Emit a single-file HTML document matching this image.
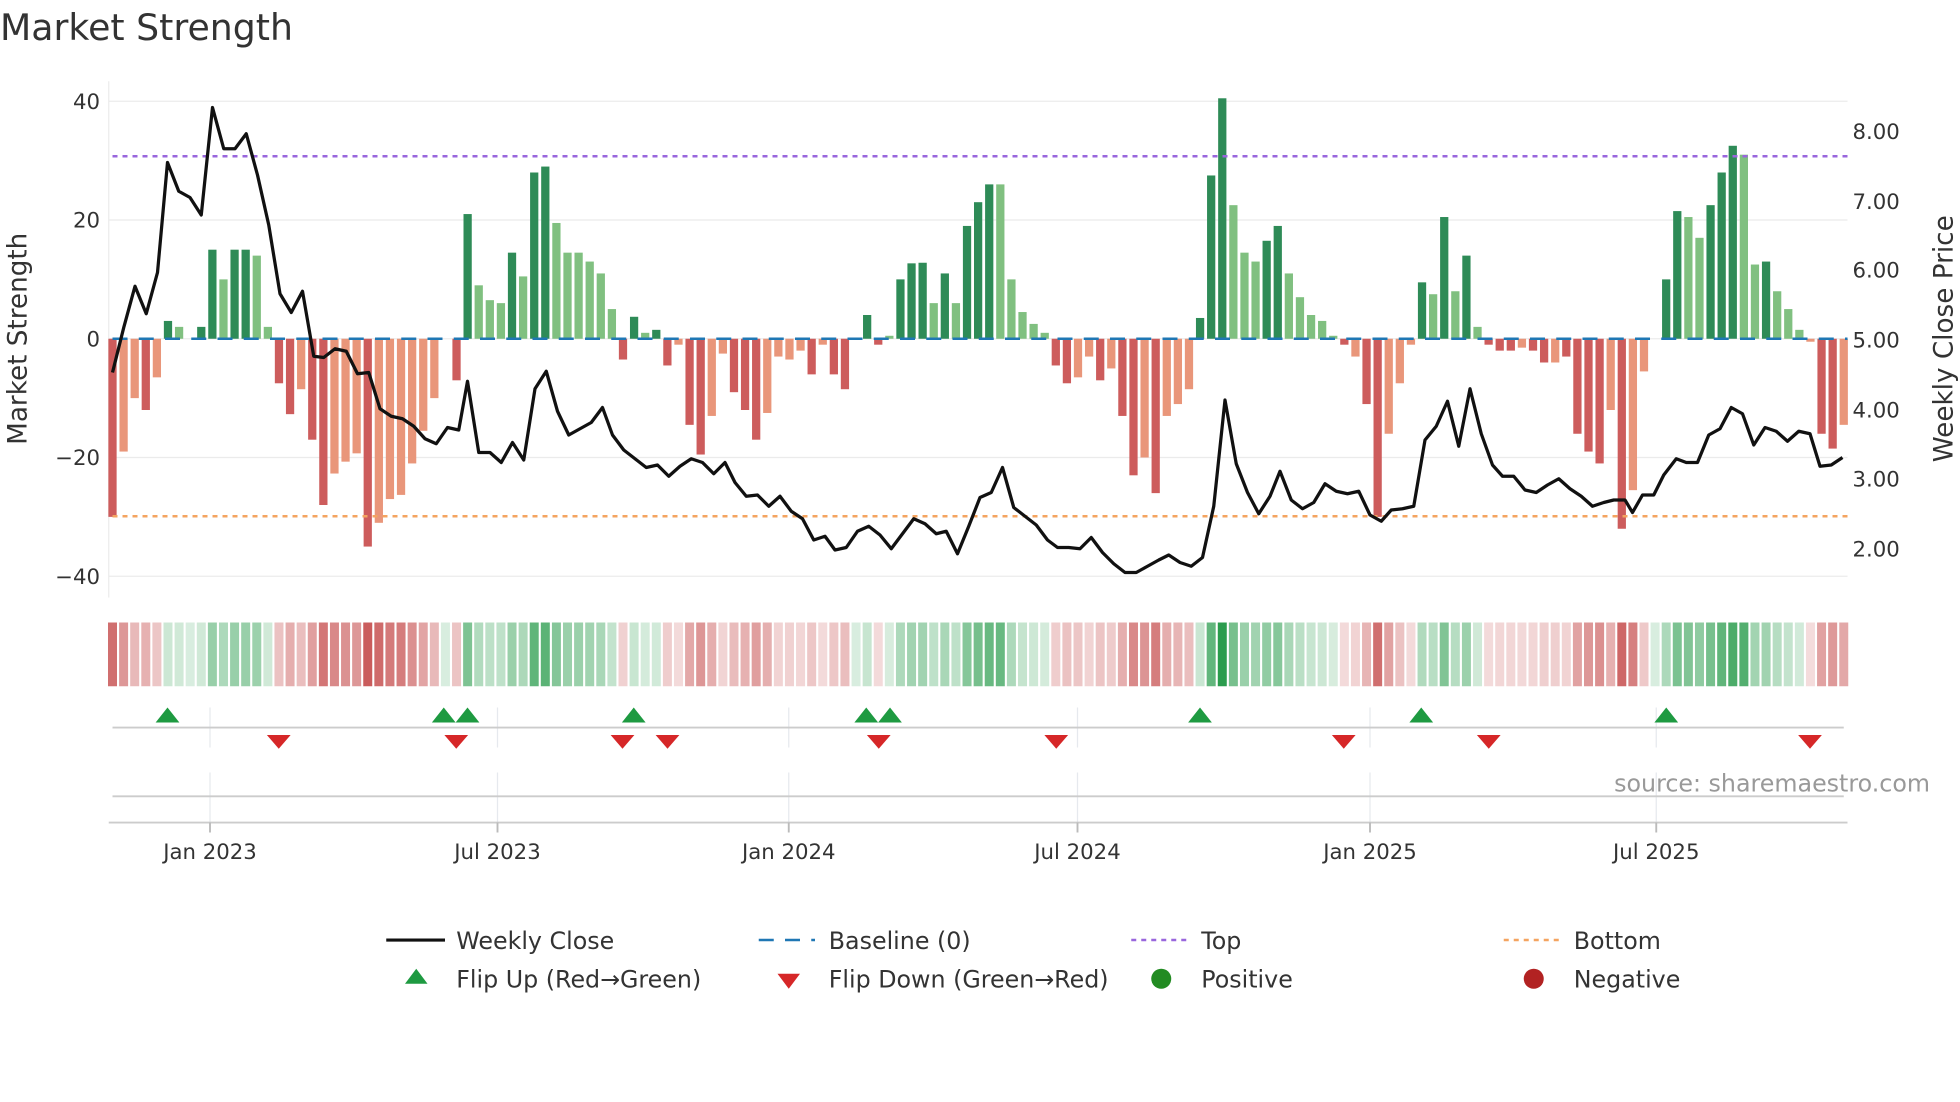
<!DOCTYPE html>
<html><head><meta charset="utf-8"><style>
html,body{margin:0;padding:0;background:#fff;}
svg{display:block;font-family:"DejaVu Sans","Liberation Sans",sans-serif;}
</style></head><body>
<svg id="s" width="1960" height="1102" viewBox="0 0 1568 881.6" xmlns="http://www.w3.org/2000/svg">
<rect width="1568" height="881.6" fill="#fff"/>
<text x="0" y="32" font-size="29" fill="#333">Market Strength</text>
<g stroke="#ebebeb" stroke-width="1">
<line x1="87" x2="1478" y1="81" y2="81"/><line x1="87" x2="1478" y1="176" y2="176"/>
<line x1="87" x2="1478" y1="271" y2="271"/><line x1="87" x2="1478" y1="366" y2="366"/>
<line x1="87" x2="1478" y1="461" y2="461"/>
<line x1="87" x2="87" y1="65" y2="478"/>
</g>
<g font-size="17" fill="#333" text-anchor="end">
<text x="80" y="87">40</text><text x="80" y="182">20</text><text x="80" y="277">0</text>
<text x="80" y="372">−20</text><text x="80" y="467">−40</text>
</g>
<g font-size="17" fill="#333">
<text x="1482" y="111">8.00</text><text x="1482" y="167">7.00</text><text x="1482" y="222">6.00</text>
<text x="1482" y="278">5.00</text><text x="1482" y="334">4.00</text><text x="1482" y="389">3.00</text>
<text x="1482" y="445">2.00</text>
</g>
<text transform="translate(21,271) rotate(-90)" font-size="21" fill="#333" text-anchor="middle">Market Strength</text>
<text transform="translate(1562,271) rotate(-90)" font-size="21" fill="#333" text-anchor="middle">Weekly Close Price</text>
<g id="bars"></g>
<line x1="90" x2="1478" y1="125" y2="125" stroke="#9966dd" stroke-width="2" stroke-dasharray="4,4"/>
<line x1="90" x2="1478" y1="413" y2="413" stroke="#f4a460" stroke-width="2" stroke-dasharray="4,4"/>
<line x1="90" x2="1478" y1="271" y2="271" stroke="#1f77b4" stroke-width="2" stroke-dasharray="12,9"/>
<polyline id="pl" fill="none" stroke="#111" stroke-width="2.6" stroke-linejoin="round"/>
<g id="heat"></g>
<g stroke="#e6e9ee" stroke-width="1">
<line x1="168" x2="168" y1="566" y2="598"/><line x1="398" x2="398" y1="566" y2="598"/><line x1="631" x2="631" y1="566" y2="598"/><line x1="862" x2="862" y1="566" y2="598"/><line x1="1096" x2="1096" y1="566" y2="598"/><line x1="1325" x2="1325" y1="566" y2="598"/>
<line x1="168" x2="168" y1="618" y2="658"/><line x1="398" x2="398" y1="618" y2="658"/><line x1="631" x2="631" y1="618" y2="658"/><line x1="862" x2="862" y1="618" y2="658"/><line x1="1096" x2="1096" y1="618" y2="658"/><line x1="1325" x2="1325" y1="618" y2="658"/>
</g>
<line x1="90" x2="1475" y1="582" y2="582" stroke="#ccc" stroke-width="1.5"/>
<line x1="90" x2="1475" y1="637" y2="637" stroke="#ccc" stroke-width="1.5"/>
<line x1="87" x2="1478" y1="658" y2="658" stroke="#ccc" stroke-width="1.5"/>
<g stroke="#bbb" stroke-width="1.5">
<line x1="168" x2="168" y1="658" y2="666"/><line x1="398" x2="398" y1="658" y2="666"/><line x1="631" x2="631" y1="658" y2="666"/><line x1="862" x2="862" y1="658" y2="666"/><line x1="1096" x2="1096" y1="658" y2="666"/><line x1="1325" x2="1325" y1="658" y2="666"/>
</g>
<g id="mk"></g>
<text x="1544" y="633" font-size="19" fill="#999" text-anchor="end">source: sharemaestro.com</text>
<g font-size="17" fill="#333" text-anchor="middle">
<text x="168" y="687">Jan 2023</text><text x="398" y="687">Jul 2023</text><text x="631" y="687">Jan 2024</text>
<text x="862" y="687">Jul 2024</text><text x="1096" y="687">Jan 2025</text><text x="1325" y="687">Jul 2025</text>
</g>
<g font-size="19" fill="#333">
<line x1="309" x2="356" y1="752" y2="752" stroke="#111" stroke-width="2.5"/>
<text x="365" y="759">Weekly Close</text>
<line x1="607" x2="652" y1="752" y2="752" stroke="#1f77b4" stroke-width="2" stroke-dasharray="12,9"/>
<text x="663" y="759">Baseline (0)</text>
<line x1="905" x2="950" y1="752" y2="752" stroke="#9966dd" stroke-width="2" stroke-dasharray="4,4"/>
<text x="961" y="759">Top</text>
<line x1="1203" x2="1248" y1="752" y2="752" stroke="#f4a460" stroke-width="2" stroke-dasharray="4,4"/>
<text x="1259" y="759">Bottom</text>
<polygon points="324,787 342,787 333,775" fill="#1e9a41"/>
<text x="365" y="790">Flip Up (Red→Green)</text>
<polygon points="622,779 640,779 631,791" fill="#d62728"/>
<text x="663" y="790">Flip Down (Green→Red)</text>
<circle cx="929" cy="783" r="8" fill="#228b22"/>
<text x="961" y="790">Positive</text>
<circle cx="1227" cy="783" r="8" fill="#b22222"/>
<text x="1259" y="790">Negative</text>
</g>
</svg>
<script>
var V="-30d -19l -10l -12d -6.5l 3d 2l 0l 2d 15d 10l 15d 15d 14l 2l -7.5d -12.7d -8.5l -17d -28d -22.7l -20.7l -19.3l -35d -31l -27l -26.3l -21l -15.5l -10l 0l -7d 21d 9l 6.5l 6l 14.5d 10.5l 28d 29d 19.5l 14.5l 14.5l 13l 11l 5l -3.5d 3.7d 1l 1.5d -4.5d -1l -14.5d -19.5d -13l -2.5l -9d -12d -17d -12.5l -3l -3.5l -2l -6d -1l -6d -8.5d 0l 4d -1d 0.5l 10d 12.7d 12.8d 6l 11d 6l 19d 23d 26d 26l 10l 4.5l 2.5l 1l -4.5d -7.5d -6.5l -3l -7d -5l -13d -23d -20l -26d -13l -11l -8.5l 3.5d 27.5d 40.5d 22.5l 14.5l 13l 16.5d 19d 11l 7l 4l 3l 0.5l -1d -3l -11d -30d -16l -7.5l -1l 9.5d 7.5l 20.5d 8l 14d 2l -1d -2d -2d -1.5l -2d -4d -4l -3d -16d -19d -21d -12l -32d -25.5l -5.5l 0l 10d 21.5d 20.5l 17l 22.5d 28d 32.5d 31l 12.5l 13d 8l 5l 1.5l -0.5l -16d -18.5d -14.5l".split(" ");
var NS="http://www.w3.org/2000/svg",n=V.length,sp=(1475-90)/(n-1);
function el(t,a,p){var e=document.createElementNS(NS,t);for(var k in a)e.setAttribute(k,a[k]);document.getElementById(p).appendChild(e);return e;}
V.forEach(function(s,i){var v=parseFloat(s),d=s.slice(-1)=="d",x=90+sp*i;
 var c=v>=0?(d?"#2e8b57":"#80c080"):(d?"#cd5c5c":"#e9967a");
 var h=Math.abs(v)*4.75,y=v>=0?271-h:271;
 if(h>0.3)el("rect",{x:x-3.3,y:y,width:6.6,height:h,fill:c},"bars");
 var a=Math.min(1,0.18+0.7*Math.abs(v)/35);
 var hc=v>=0?"rgba(40,155,75,"+a+")":"rgba(195,70,70,"+a+")";
 el("rect",{x:x-3.6,y:498,width:7.2,height:51,fill:hc},"heat");
});
var L="90,298 99,262 108,229 117,251 126,218 134,130 143,153 152,158 161,172 170,86 179,119 188,119 197,107 206,140 215,180 224,235 233,250 242,233 251,285 259,286 268,279 277,281 286,299 295,298 304,327 313,333 322,335 331,341 340,351 349,355 358,342 367,344 374,305 383,362 392,362 401,370 410,354 419,368 428,311 437,297 446,329 455,348 464,343 473,338 482,326 490,348 499,360 508,367 517,374 526,372 535,381 544,373 553,367 562,370 571,379 580,370 588,386 597,397 606,396 615,405 624,397 633,409 642,415 651,432 660,429 668,440 677,438 686,425 695,421 704,428 713,439 722,427 731,415 740,419 749,427 757,425 766,443 775,421 784,398 793,394 802,374 811,406 820,413 829,420 838,432 846,438 855,438 864,439 873,430 882,442 891,451 900,458 909,458 918,453 927,448 935,444 944,450 953,453 962,446 971,405 980,320 989,371 998,394 1007,411 1016,397 1024,377 1033,400 1042,407 1051,402 1060,387 1069,393 1078,395 1087,393 1096,412 1105,417 1113,408 1122,407 1131,405 1140,352 1149,341 1158,321 1167,357 1176,311 1185,347 1194,372 1202,381 1211,381 1220,392 1229,394 1238,388 1247,383 1256,391 1265,397 1274,405 1283,402 1291,400 1300,400 1306,410 1314,396 1323,396 1331,380 1341,367 1349,370 1358,370 1367,348 1376,343 1385,326 1394,331 1403,356 1412,342 1421,345 1430,353 1439,345 1448,347 1456,373 1465,372 1474,366";
document.getElementById("pl").setAttribute("points",L);
[134,355,374,507,693,712,960,1137,1333].forEach(function(x){el("polygon",{points:(x-9.5)+",578 "+(x+9.5)+",578 "+x+",566",fill:"#1e9a41"},"mk");});
[223,365,498,534,703,845,1075,1191,1448].forEach(function(x){el("polygon",{points:(x-9.5)+",588 "+(x+9.5)+",588 "+x+",599",fill:"#d62728"},"mk");});
</script>
</body></html>
